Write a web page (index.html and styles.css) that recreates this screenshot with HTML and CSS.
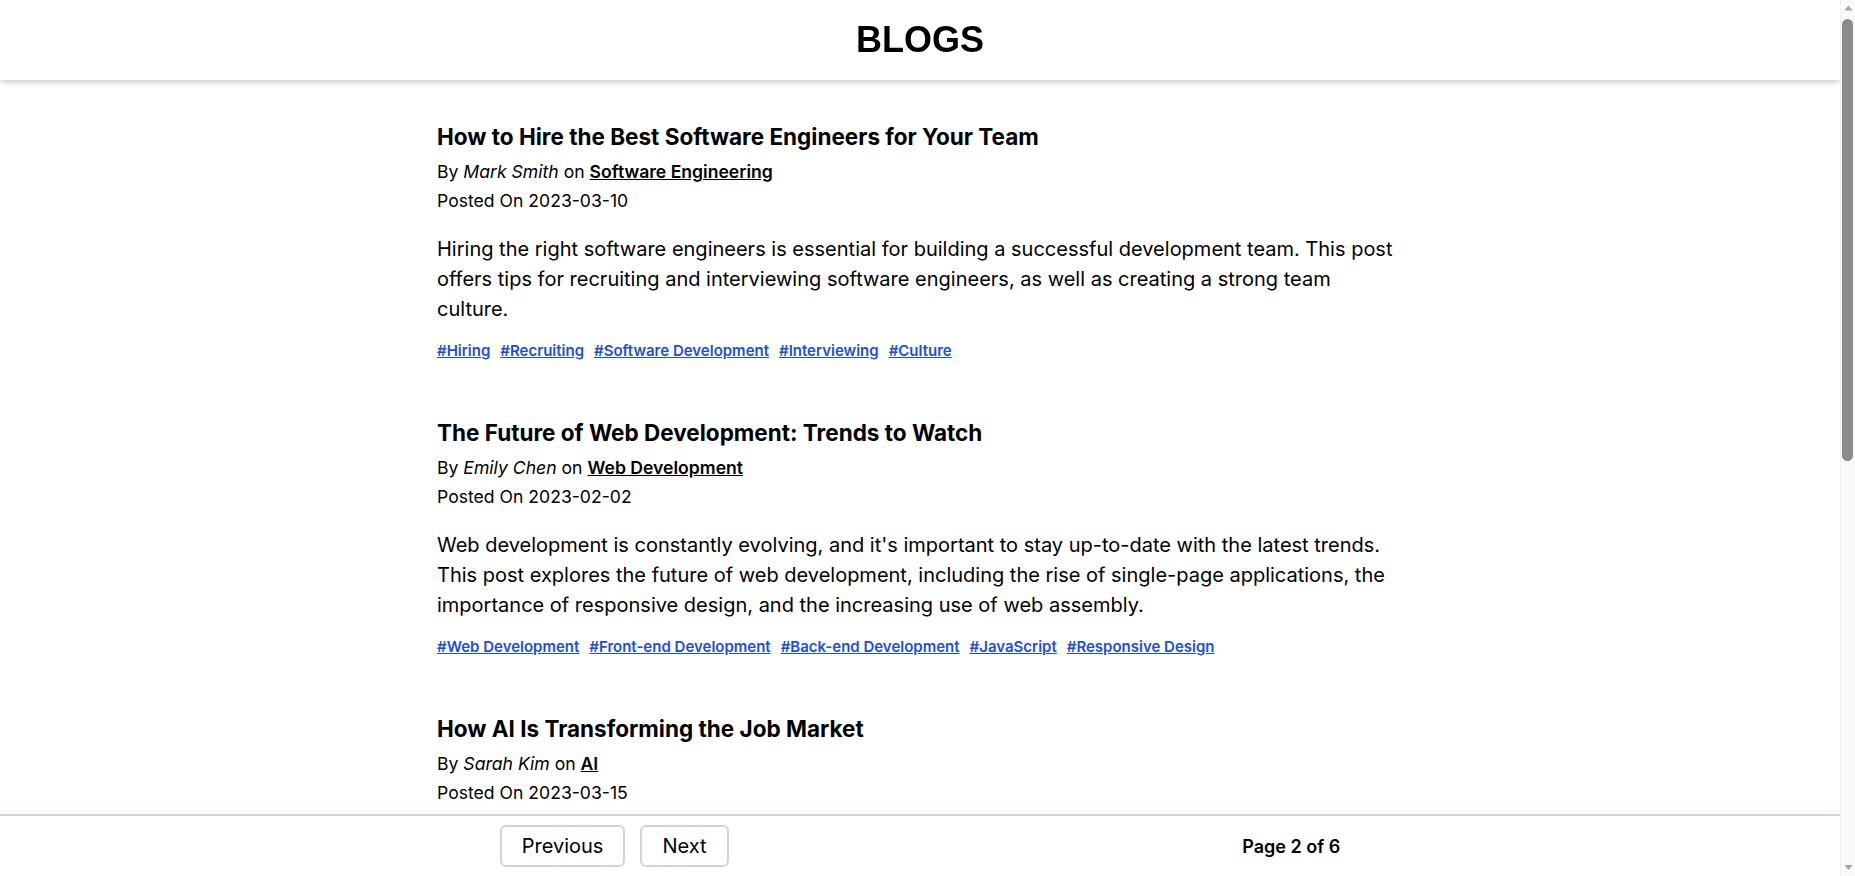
FILE: index.html
```html
<!DOCTYPE html>
<html lang="en">
<head>
<meta charset="utf-8">
<title>Blogs</title>
<link rel="stylesheet" href="styles.css">
</head>
<body>
<header class="topbar">
  <h1 class="brand">BLOGS</h1>
</header>

<main class="feed">
  <article class="post">
    <h2 class="post-title">How to Hire the Best Software Engineers for Your Team</h2>
    <p class="post-meta">By <em>Mark Smith</em> on <a class="category" href="#">Software Engineering</a></p>
    <p class="post-meta">Posted On 2023-03-10</p>
    <p class="post-body">Hiring the right software engineers is essential for building a successful development team. This post offers tips for recruiting and interviewing software engineers, as well as creating a strong team culture.</p>
    <div class="tags">
      <a href="#">#Hiring</a><a href="#">#Recruiting</a><a href="#">#Software Development</a><a href="#">#Interviewing</a><a href="#">#Culture</a>
    </div>
  </article>

  <article class="post">
    <h2 class="post-title">The Future of Web Development: Trends to Watch</h2>
    <p class="post-meta">By <em>Emily Chen</em> on <a class="category" href="#">Web Development</a></p>
    <p class="post-meta">Posted On 2023-02-02</p>
    <p class="post-body">Web development is constantly evolving, and it's important to stay up-to-date with the latest trends. This post explores the future of web development, including the rise of single-page applications, the importance of responsive design, and the increasing use of web assembly.</p>
    <div class="tags">
      <a href="#">#Web Development</a><a href="#">#Front-end Development</a><a href="#">#Back-end Development</a><a href="#">#JavaScript</a><a href="#">#Responsive Design</a>
    </div>
  </article>

  <article class="post">
    <h2 class="post-title">How AI Is Transforming the Job Market</h2>
    <p class="post-meta">By <em>Sarah Kim</em> on <a class="category" href="#">AI</a></p>
    <p class="post-meta">Posted On 2023-03-15</p>
  </article>
</main>

<footer class="pager">
  <div class="pager-buttons">
    <button class="pager-btn" type="button">Previous</button>
    <button class="pager-btn" type="button">Next</button>
  </div>
  <span class="pager-status">Page 2 of 6</span>
</footer>

<div class="scrollbar" aria-hidden="true">
  <svg class="sb-arrow" width="15" height="17" viewBox="0 0 15 17"><path d="M3.5 10.5 L7.5 5.5 L11.5 10.5 Z" fill="#a3a3a3"/></svg>
  <div class="sb-track"><div class="sb-thumb"></div></div>
  <svg class="sb-arrow" width="15" height="17" viewBox="0 0 15 17"><path d="M3.5 6 L7.5 11 L11.5 6 Z" fill="#a3a3a3"/></svg>
</div>
</body>
</html>
```

FILE: styles.css
```css
* {
  box-sizing: border-box;
}

html, body {
  margin: 0;
  padding: 0;
  background: #ffffff;
}

body {
  font-family: "Inter", "Noto Sans", sans-serif;
  color: #000000;
  margin-right: 15px;
  height: 876px;
  overflow: hidden;
}

.topbar {
  position: fixed;
  top: 0;
  left: 0;
  right: 15px;
  height: 80px;
  background: #ffffff;
  display: flex;
  align-items: center;
  justify-content: center;
  box-shadow: 0 2px 6px rgba(0, 0, 0, 0.22);
  z-index: 10;
}

.brand {
  margin: 0;
  font-family: "Liberation Sans", Arial, sans-serif;
  font-size: 36px;
  font-weight: 700;
  line-height: 40px;
}

.feed {
  max-width: 1030px;
  margin: 0 auto;
  padding: 121px 32px 100px;
  display: flex;
  flex-direction: column;
  gap: 56px;
}

.post {
  display: flex;
  flex-direction: column;
}

.post-title {
  margin: 0 0 4px;
  font-size: 22.5px;
  line-height: 32px;
  font-weight: 700;
}

.post-meta {
  margin: 0;
  font-size: 17.6px;
  line-height: 29px;
}

.post-meta em {
  font-style: italic;
}

.category {
  color: #000000;
  font-weight: 600;
  text-decoration: underline;
}

.post-body {
  margin: 19px 0 0;
  font-size: 20px;
  line-height: 30px;
}

.tags {
  margin-top: 17px;
  display: flex;
  flex-wrap: wrap;
  gap: 10px;
  font-size: 15px;
  line-height: 20px;
}

.tags a {
  color: #1d4ed8;
  font-weight: 600;
  text-decoration: underline;
}

.pager {
  position: fixed;
  left: 0;
  right: 15px;
  bottom: 0;
  height: 62px;
  background: #ffffff;
  border-top: 2px solid #d1d5db;
  display: flex;
  align-items: center;
  justify-content: space-evenly;
  z-index: 10;
}

.pager-buttons {
  display: flex;
  gap: 15px;
}

.pager-btn {
  font-family: "Inter", "Noto Sans", sans-serif;
  font-size: 20px;
  line-height: 28px;
  color: #000000;
  background: #ffffff;
  border: 2px solid #d1d5db;
  border-radius: 6px;
  padding: 5px 20px 5px;
  cursor: pointer;
}

.pager-status {
  margin-left: 14px;
  font-size: 18px;
  font-weight: 600;
}

.scrollbar {
  position: fixed;
  top: 0;
  right: 0;
  bottom: 0;
  width: 15px;
  background: #f9f9f9;
  border-left: 1px solid #f0f0f0;
  display: flex;
  flex-direction: column;
  z-index: 20;
}

.sb-arrow {
  display: block;
  flex: none;
}

.sb-track {
  flex: 1;
  padding: 2px 2px 0 1px;
}

.sb-thumb {
  width: 11px;
  height: 442px;
  border-radius: 6px;
  background: #8a8a8a;
}
```
